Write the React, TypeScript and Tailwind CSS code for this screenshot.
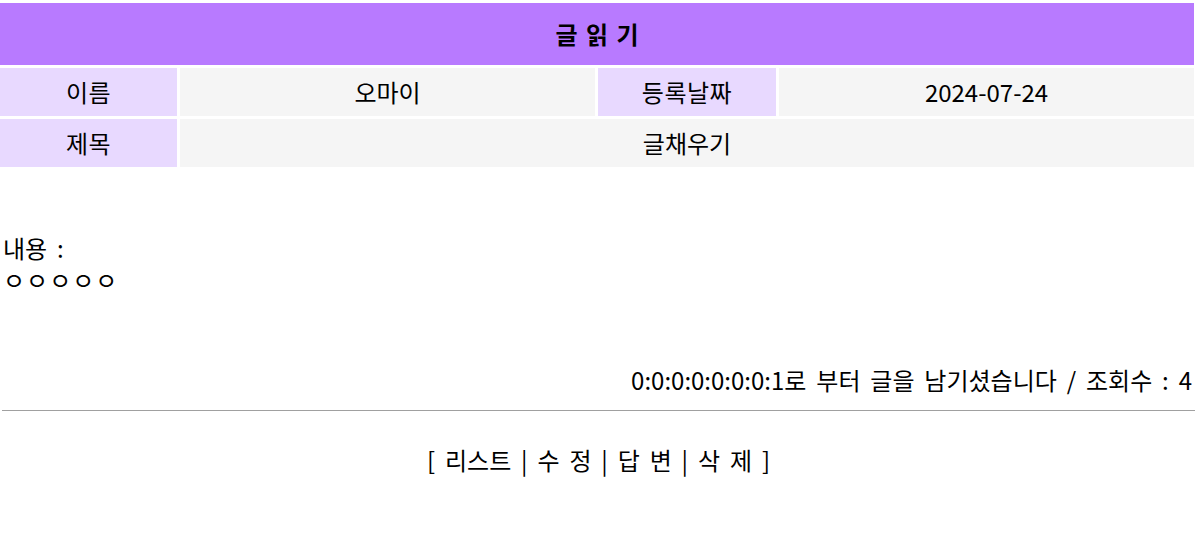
import React from 'react';

const font = { fontFamily: '"Malgun Gothic", "Noto Sans CJK KR", "Noto Sans", sans-serif' };

const Label: React.FC<{ children: React.ReactNode }> = ({ children }) => (
  <div className="bg-[#e8d9ff] h-[48px] flex items-center justify-center tracking-[0.5px]">{children}</div>
);

const Value: React.FC<{ children: React.ReactNode; wide?: boolean }> = ({ children, wide }) => (
  <div className={`bg-[#f5f5f5] h-[48px] flex items-center justify-center ${wide ? 'col-span-3' : ''}`}>
    {children}
  </div>
);

export default function App() {
  return (
    <div className="w-[1197px] min-h-[535px] bg-white text-black text-[24px] [word-spacing:4.5px]" style={font}>
      <div className="pt-[3px] w-[1194px] grid grid-cols-[177px_415px_178px_415px] gap-x-[3px] gap-y-[3px]">
        <div className="col-span-4 h-[62px] bg-[#b87aff] flex items-center justify-center font-bold text-[24px] [word-spacing:3px]">
          글 읽 기
        </div>
        <Label>이름</Label>
        <Value>오마이</Value>
        <Label>등록날짜</Label>
        <Value>2024-07-24</Value>
        <Label>제목</Label>
        <Value wide>글채우기</Value>
      </div>

      <div className="mt-[65px] px-[3px] leading-[32px]">
        <div>내용 :</div>
        <div className="tracking-[1px]">ㅇㅇㅇㅇㅇ</div>
      </div>

      <div className="mt-[68px] pr-[5px] text-right leading-[32px]">
        0:0:0:0:0:0:0:1로 부터 글을 남기셨습니다 / 조회수 : 4
      </div>

      <hr className="mt-[14px] mx-[2px] border-0 border-t border-[#a0a0a0]" />

      <div className="mt-[33px] text-center leading-[32px]">[ 리스트 | 수 정 | 답 변 | 삭 제 ]</div>
    </div>
  );
}
